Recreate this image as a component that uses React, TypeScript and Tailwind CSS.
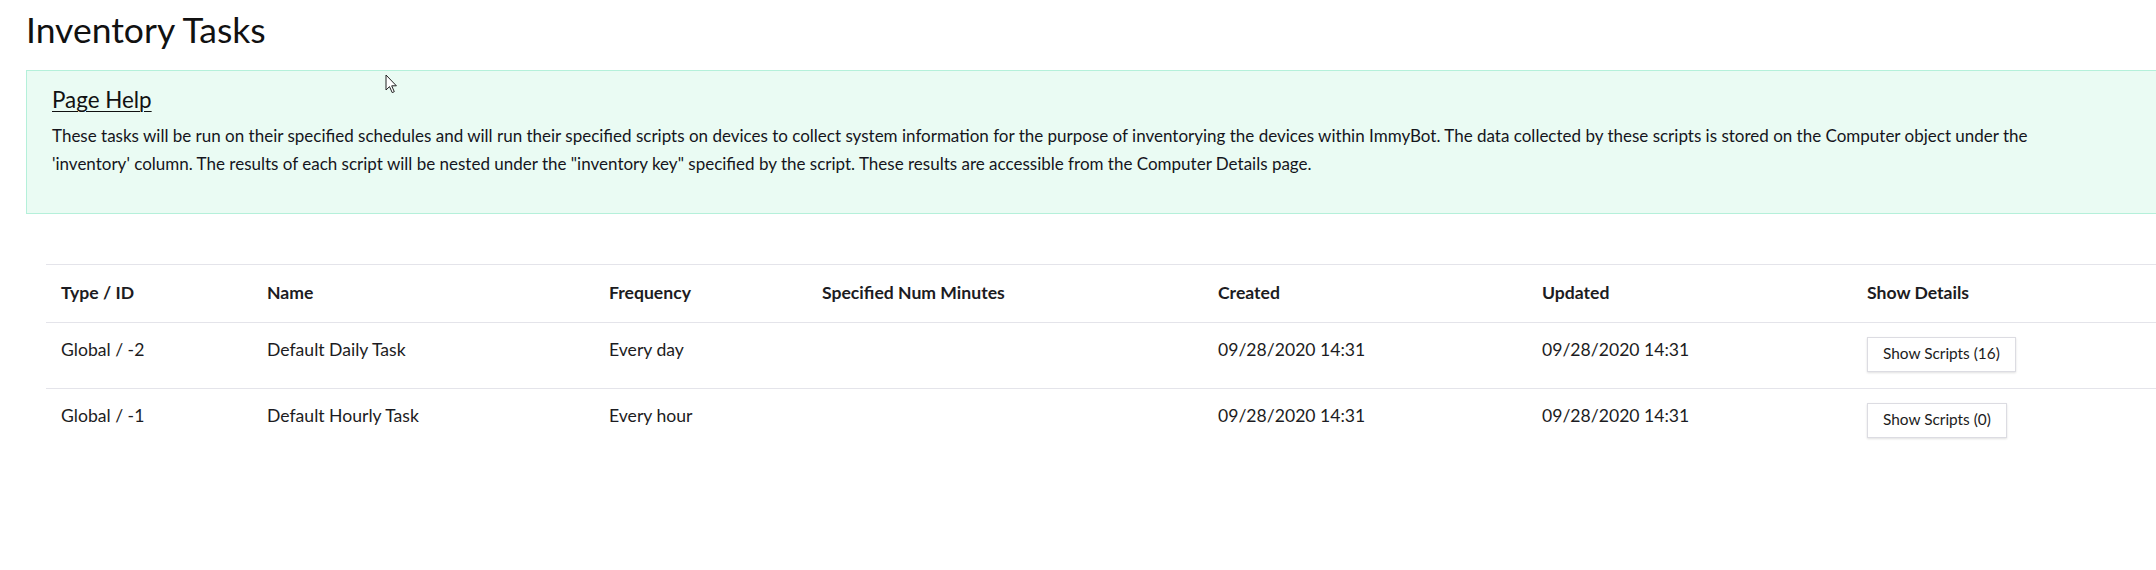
import React from 'react';

interface TaskRow {
  typeId: string;
  name: string;
  frequency: string;
  minutes: string;
  created: string;
  updated: string;
  scripts: number;
}

const rows: TaskRow[] = [
  { typeId: 'Global / -2', name: 'Default Daily Task', frequency: 'Every day', minutes: '', created: '09/28/2020 14:31', updated: '09/28/2020 14:31', scripts: 16 },
  { typeId: 'Global / -1', name: 'Default Hourly Task', frequency: 'Every hour', minutes: '', created: '09/28/2020 14:31', updated: '09/28/2020 14:31', scripts: 0 },
];

const headers = ['Type / ID', 'Name', 'Frequency', 'Specified Num Minutes', 'Created', 'Updated', 'Show Details'];

const Cursor: React.FC = () => (
  <svg className="absolute left-[385px] top-[74px]" width="13" height="20" viewBox="0 0 13 20">
    <path d="M1 1 L1 16 L4.5 12.6 L7.2 18.6 L9.3 17.7 L6.7 11.8 L11.4 11.8 Z" fill="white" stroke="#222" strokeWidth="1" strokeLinejoin="round" />
  </svg>
);

const App: React.FC = () => {
  return (
    <div className="relative w-full h-[570px] overflow-hidden bg-white text-[#1c1c22] font-['Lato','Noto_Sans',sans-serif]">
      <h1 className="pl-[26px] pt-[9px] text-[35.5px] leading-[1.2] font-normal text-[#111]">Inventory Tasks</h1>

      <div className="mt-[18.5px] ml-[26px] w-[2140px] h-[144px] bg-[#eafbf3] border border-[#b5f0da] pl-[25px] pr-[25px] pt-[16px]">
        <h3 className="text-[22.4px] leading-[1.2] underline underline-offset-[3px] decoration-1 text-[#111]">Page Help</h3>
        <p className="mt-[8.5px] w-[2045px] text-[17px] leading-[27.6px] text-[#15151c]">
          These tasks will be run on their specified schedules and will run their specified scripts on devices to collect system information for the purpose of inventorying the devices within ImmyBot. The data collected by these scripts is stored on the Computer object under the 'inventory' column. The results of each script will be nested under the "inventory key" specified by the script. These results are accessible from the Computer Details page.
        </p>
      </div>

      <div className="mt-[50px] ml-[46px]">
        <table className="table-fixed w-[2126px] border-collapse text-[17.6px] leading-[26.4px]">
          <colgroup>
            <col className="w-[206px]" />
            <col className="w-[342px]" />
            <col className="w-[213px]" />
            <col className="w-[396px]" />
            <col className="w-[324px]" />
            <col className="w-[325px]" />
            <col />
          </colgroup>
          <thead>
            <tr className="border-t border-b border-[#e4e4ea]">
              {headers.map((h) => (
                <th key={h} className="text-left font-bold px-[15px] pt-[15px] pb-[15px] align-top">{h}</th>
              ))}
            </tr>
          </thead>
          <tbody>
            {rows.map((r, i) => (
              <tr key={r.typeId} className={i < rows.length - 1 ? 'border-b border-[#e4e4ea]' : ''}>
                <td className="px-[15px] pt-[14px] pb-[16px] align-top">{r.typeId}</td>
                <td className="px-[15px] pt-[14px] pb-[16px] align-top">{r.name}</td>
                <td className="px-[15px] pt-[14px] pb-[16px] align-top">{r.frequency}</td>
                <td className="px-[15px] pt-[14px] pb-[16px] align-top">{r.minutes}</td>
                <td className="px-[15px] pt-[14px] pb-[16px] align-top">{r.created}</td>
                <td className="px-[15px] pt-[14px] pb-[16px] align-top">{r.updated}</td>
                <td className="px-[15px] pt-[14px] pb-[16px] align-top">
                  <button className="h-[35px] px-[15px] bg-white border border-[#dcdce2] shadow-[0_1px_2px_rgba(0,0,0,0.12)] text-[15.4px] leading-none text-[#1c1c22]">
                    Show Scripts ({r.scripts})
                  </button>
                </td>
              </tr>
            ))}
          </tbody>
        </table>
      </div>

      <Cursor />
    </div>
  );
};

export default App;
